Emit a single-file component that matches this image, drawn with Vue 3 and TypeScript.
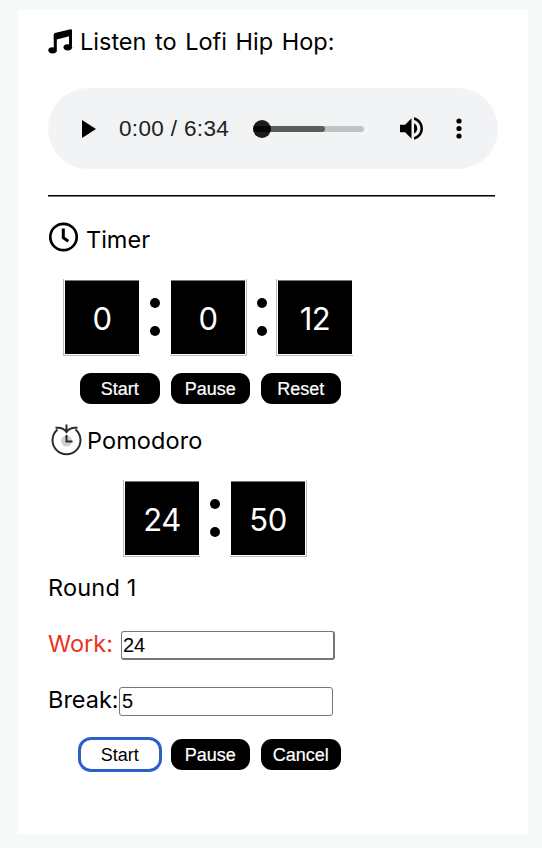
<script setup lang="ts">
import { ref } from 'vue'

interface Digit {
  value: string
  edge: 'left' | 'right'
}

const timer: Digit[] = [
  { value: '0', edge: 'left' },
  { value: '0', edge: 'right' },
  { value: '12', edge: 'left' },
]
const pomodoro: Digit[] = [
  { value: '24', edge: 'left' },
  { value: '50', edge: 'right' },
]
const work = ref('24')
const rest = ref('5')
</script>

<template>
  <div class="page">
    <main class="card">
      <h2 class="title music">
        <svg class="note" viewBox="0 0 25 25"><path d="M7.300 20V6.500L22.500 2.500V17" fill="none" stroke="#000" stroke-width="3" stroke-linejoin="round" /><path d="M5.800 5.500Q5.800 4.400 7 4L22.500 .3Q24 0 24 1.600V6.500L8.800 10.500L5.800 10.500Z" /><ellipse cx="4.600" cy="21.300" rx="4.300" ry="3.100" /><ellipse cx="19.800" cy="18.300" rx="4.300" ry="3.100" /></svg>
        <span class="label-music">Listen to Lofi Hip Hop:</span>
      </h2>

      <div class="player">
        <svg class="play" viewBox="0 0 14 18"><path d="M0 0L14 9L0 18Z" /></svg>
        <span class="time">0:00 / 6:34</span>
        <div class="track">
          <div class="buffered"></div>
          <div class="knob"></div>
        </div>
        <svg class="volume" viewBox="3 3 18 18"><path d="M3 9v6h4l5 5V4L7 9H3zm13.500 3c0-1.770-1.020-3.290-2.500-4.030v8.050c1.480-.73 2.500-2.250 2.500-4.020zM14 3.230v2.060c2.890.86 5 3.540 5 6.710s-2.110 5.850-5 6.710v2.060c4.010-.91 7-4.490 7-8.770s-2.990-7.860-7-8.770z" /></svg>
        <svg class="more" viewBox="0 0 6 21"><circle cx="3" cy="3" r="2.600" /><circle cx="3" cy="10.500" r="2.600" /><circle cx="3" cy="18" r="2.600" /></svg>
      </div>

      <div class="rule"></div>

      <h2 class="title timer">
        <svg class="clock" viewBox="0 0 30 30"><circle cx="15.500" cy="15" r="13.200" fill="none" stroke="#000" stroke-width="2.700" /><path d="M15.300 6.500V15.800L20.300 19.300" fill="none" stroke="#000" stroke-width="3" /></svg>
        <span class="label-timer">Timer</span>
      </h2>

      <div class="digits">
        <template v-for="(d, i) in timer" :key="i">
          <div v-if="i > 0" class="colon"><i></i><i></i></div>
          <div class="cell" :class="d.edge"><div class="face">{{ d.value }}</div></div>
        </template>
      </div>
      <div class="buttons">
        <button>Start</button>
        <button>Pause</button>
        <button>Reset</button>
      </div>

      <h2 class="title pomo">
        <svg class="tomato" viewBox="0 0 32 33">
          <circle cx="15.500" cy="17" r="5.500" fill="#d0d0d0" />
          <g fill="none" stroke="#2b2b2b" stroke-width="2">
            <path d="M6.500 5.500A14 14 0 1 0 24.500 5.500" />
            <path d="M4.500 3.800Q12.500 3 15.500 8Q18.500 3 26.500 3.800M15.500 .5V8" />
            <path d="M15.500 11V17.500H21.500" />
          </g>
        </svg>
        <span class="label-pomo">Pomodoro</span>
      </h2>

      <div class="digits second">
        <template v-for="(d, i) in pomodoro" :key="i">
          <div v-if="i > 0" class="colon"><i></i><i></i></div>
          <div class="cell" :class="d.edge"><div class="face">{{ d.value }}</div></div>
        </template>
      </div>

      <p class="round">Round 1</p>
      <label class="field work"><span>Work:</span><input v-model="work" type="text" /></label>
      <label class="field rest"><span>Break:</span><input v-model="rest" type="text" /></label>
      <div class="buttons last">
        <button class="active">Start</button>
        <button>Pause</button>
        <button>Cancel</button>
      </div>
    </main>
  </div>
</template>

<style>
body {
  background: #f5f9f8;
}
</style>

<style scoped>
.page {
  box-sizing: border-box;
  height: 848px;
  padding: 9px 14px 14px 18px;
  font-family: Inter, "Liberation Sans", sans-serif;
  color: #000;
}
.card {
  box-sizing: border-box;
  height: 825px;
  padding: 17px 30px 0;
  background: #fff;
}
.title {
  display: flex;
  align-items: center;
  margin: 0;
  height: 32px;
  font-size: 23.5px;
  font-weight: 400;
  line-height: 32px;
  white-space: nowrap;
}
.note {
  width: 25px;
  height: 25px;
  margin: -1px 7px 0 0;
}
.label-music {
  word-spacing: 2px;
}
.player {
  box-sizing: border-box;
  display: flex;
  align-items: center;
  width: 450px;
  height: 81px;
  margin-top: 30px;
  padding-left: 34px;
  border-radius: 41px;
  background: #f1f3f4;
}
.play {
  width: 14px;
  height: 18px;
}
.time {
  width: 110px;
  margin-left: 23px;
  font-family: "Liberation Sans", sans-serif;
  font-size: 22.5px;
  letter-spacing: 0.35px;
  line-height: 30px;
  white-space: nowrap;
  color: #202124;
}
.track {
  position: relative;
  width: 110px;
  height: 6px;
  margin-left: 25px;
  border-radius: 3px;
  background: #c1c2c3;
}
.buffered {
  width: 71px;
  height: 6px;
  border-radius: 3px;
  background: #5b5c5c;
}
.knob {
  position: absolute;
  left: -1px;
  top: -6px;
  width: 18px;
  height: 18px;
  border-radius: 50%;
  background: linear-gradient(#1c1c1c 33%, #060606 33% 67%, #1c1c1c 67%);
}
.volume {
  width: 23px;
  height: 23px;
  margin-left: 36px;
}
.more {
  width: 6px;
  height: 21px;
  margin-left: 33.4px;
}
.rule {
  width: 447px;
  height: 1px;
  margin-top: 26px;
  border-bottom: 1px solid #777;
  background: #000;
}
.timer {
  margin-top: 25px;
}
.clock {
  width: 30px;
  height: 30px;
  margin: -2px 8px 0 0;
}
.label-timer {
  padding-top: 4px;
}
.digits {
  display: flex;
  margin: 25px 0 0 15px;
}
.cell {
  box-sizing: border-box;
  width: 77px;
  height: 77px;
  padding: 1px;
  border-bottom: 1px solid #bbb;
}
.left {
  border-left: 1px solid #bbb;
}
.right {
  border-right: 1px solid #bbb;
}
.right + .colon {
  width: 29px;
}
.face {
  box-sizing: border-box;
  width: 74px;
  height: 74px;
  border-top: 1px solid #777;
  background: #000;
  color: #fff;
  font-size: 31px;
  letter-spacing: -0.5px;
  line-height: 75px;
  text-align: center;
}
.colon {
  display: flex;
  flex-direction: column;
  justify-content: space-between;
  align-items: center;
  width: 30px;
  height: 38px;
  margin-top: 19px;
}
.colon i {
  width: 10px;
  height: 10px;
  border-radius: 50%;
  background: #000;
}
.buttons {
  display: flex;
  gap: 11px;
  margin: 17px 0 0 32px;
}
button {
  box-sizing: border-box;
  width: 79.5px;
  height: 31px;
  padding: 1px 0 0;
  border: 0;
  border-radius: 11px;
  background: #000;
  color: #fff;
  font: 18px/31px "Liberation Sans", sans-serif;
  -webkit-text-stroke: 0.2px currentColor;
}
button.active {
  background: #fff;
  color: #000;
  -webkit-text-stroke: 0;
  outline: 3px solid #2c60c8;
  outline-offset: -1.5px;
}
.pomo {
  height: 34px;
  margin-top: 19px;
}
.tomato {
  width: 32px;
  height: 33px;
  margin: 0 4px 0 3px;
}
.label-pomo {
  padding-top: 1px;
  letter-spacing: 0.1px;
}
.second {
  margin: 23px 0 0 75px;
}
.round {
  margin: 14px 0 0;
  font-size: 23.5px;
  line-height: 34px;
  letter-spacing: 0.2px;
}
.field {
  display: flex;
  align-items: center;
  height: 30px;
  font-size: 23.5px;
  white-space: nowrap;
}
.field span {
  width: 71px;
  line-height: 28px;
  margin-top: -3px;
}
.work {
  margin-top: 25px;
}
.work span {
  width: 73px;
  color: #ea3323;
}
.rest {
  margin-top: 26px;
}
input {
  box-sizing: border-box;
  width: 214px;
  height: 29px;
  padding: 0 2px;
  border: 1px solid #767676;
  border-radius: 3px;
  outline: 0;
  background: #fff;
  color: #000;
  font: 20px "Liberation Sans", sans-serif;
}
.work input {
  padding: 1px 1px 0;
  border-right-width: 2px;
  border-bottom-width: 2px;
}
.last {
  margin-top: 23px;
}
</style>
